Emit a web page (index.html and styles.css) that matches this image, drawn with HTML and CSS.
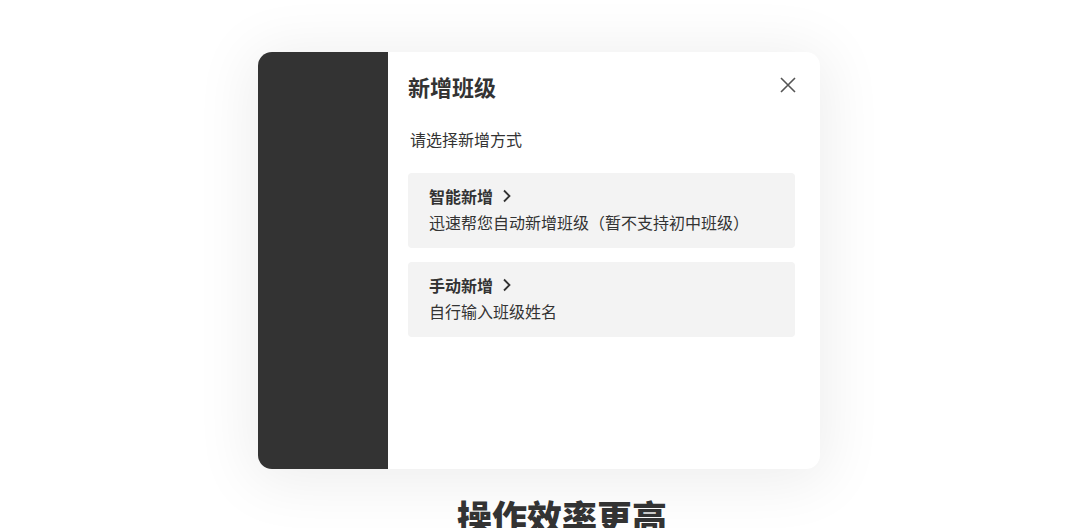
FILE: index.html
```html
<!DOCTYPE html>
<html lang="zh-CN">
<head>
    <meta charset="UTF-8">
    <meta name="viewport" content="width=device-width, initial-scale=1.0">
    <title>新增班级</title>
    <link rel="stylesheet" href="styles.css">
</head>
<body>

<main class="stage">
    <div class="dialog">
        <div class="dialog-side"></div>
        <div class="dialog-body">
            <div class="dialog-header">
                <h2>新增班级</h2>
                <button class="close" aria-label="关闭">
                    <svg width="16" height="16" viewBox="0 0 16 16">
                        <path d="M1 1 L15 15 M15 1 L1 15" stroke="#555" stroke-width="1.6" fill="none"/>
                    </svg>
                </button>
            </div>
            <p class="hint">请选择新增方式</p>

            <div class="option">
                <div class="option-title">智能新增
                    <svg width="10" height="14" viewBox="0 0 10 14">
                        <path d="M2 1.5 L7.5 7 L2 12.5" stroke="#333" stroke-width="1.8" fill="none"/>
                    </svg>
                </div>
                <div class="option-desc">迅速帮您自动新增班级（暂不支持初中班级）</div>
            </div>

            <div class="option">
                <div class="option-title">手动新增
                    <svg width="10" height="14" viewBox="0 0 10 14">
                        <path d="M2 1.5 L7.5 7 L2 12.5" stroke="#333" stroke-width="1.8" fill="none"/>
                    </svg>
                </div>
                <div class="option-desc">自行输入班级姓名</div>
            </div>
        </div>
    </div>

    <h1 class="headline">操作效率更高</h1>
</main>

</body>
</html>
```

FILE: styles.css
```css
/* Page */
body {
    margin: 0;
    background-color: #fff;
    color: #333;
    font-family: "Noto Sans CJK SC", "Noto Sans", sans-serif;
    overflow: hidden;
}

.stage {
    padding-top: 52px;
    height: 476px;
}

/* Dialog */
.dialog {
    display: flex;
    margin-left: 258px;
    width: 562px;
    height: 417px;
    background-color: #fff;
    border-radius: 14px;
    overflow: hidden;
    box-shadow: 0 6px 60px 8px rgba(0, 0, 0, 0.07);
}

.dialog-side {
    width: 130px;
    background-color: #333;
}

.dialog-body {
    flex: 1;
    padding: 19px 25px 0 20px;
}

.dialog-header {
    display: flex;
    justify-content: space-between;
    align-items: center;
}

.dialog-header h2 {
    margin: 0;
    font-size: 22px;
    line-height: 30px;
    font-weight: 700;
}

.close {
    background: none;
    border: none;
    padding: 0;
    margin-right: -1px;
    margin-top: -2px;
    width: 16px;
    height: 16px;
    cursor: pointer;
    display: flex;
}

.hint {
    margin: 27px 0 23px 2px;
    font-size: 16px;
    line-height: 22px;
}

/* Options */
.option {
    background-color: #f3f3f3;
    border-radius: 4px;
    padding: 10px 20px 13px 21px;
    margin-bottom: 14px;
}

.option-title {
    display: flex;
    align-items: center;
    gap: 9px;
    font-size: 16px;
    line-height: 26px;
    font-weight: 700;
}

.option-desc {
    font-size: 16px;
    line-height: 26px;
}

/* Bottom headline */
.headline {
    margin: 26px 0 0 457px;
    font-size: 35px;
    line-height: 42px;
    font-weight: 900;
    color: #333;
}
```
